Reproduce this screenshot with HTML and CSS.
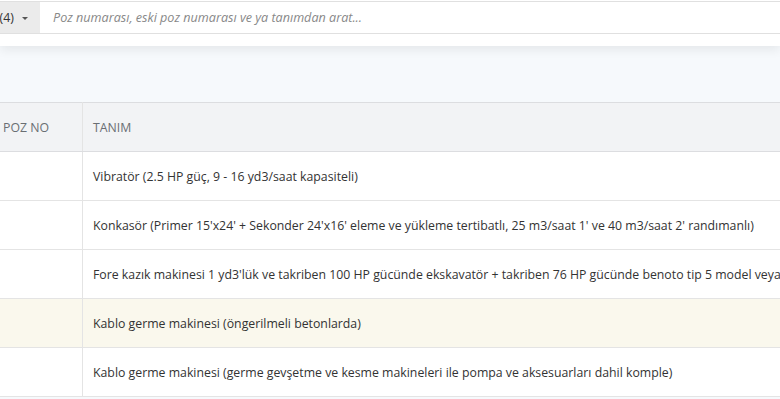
FILE: index.html
```html
<!DOCTYPE html>
<html lang="tr">
<head>
  <meta charset="UTF-8">
  <title>Pozlar</title>
  <link rel="stylesheet" href="styles.css">
</head>
<body>
  <div class="topbar">
    <div class="search">
      <button class="filter">Tümü (4) <span class="caret"></span></button>
      <input type="text" class="query" placeholder="Poz numarası, eski poz numarası ve ya tanımdan arat...">
    </div>
  </div>
  <div class="band"></div>
  <table class="grid">
    <thead>
      <tr>
        <th class="col-no">Poz No</th>
        <th>Tanım</th>
      </tr>
    </thead>
    <tbody>
      <tr><td class="col-no"></td><td>Vibratör (2.5 HP güç, 9 - 16 yd3/saat kapasiteli)</td></tr>
      <tr><td class="col-no"></td><td>Konkasör (Primer 15'x24' + Sekonder 24'x16' eleme ve yükleme tertibatlı, 25 m3/saat 1' ve 40 m3/saat 2' randımanlı)</td></tr>
      <tr><td class="col-no"></td><td>Fore kazık makinesi 1 yd3'lük ve takriben 100 HP gücünde ekskavatör + takriben 76 HP gücünde benoto tip 5 model veya muadili</td></tr>
      <tr class="active"><td class="col-no"></td><td>Kablo germe makinesi (öngerilmeli betonlarda)</td></tr>
      <tr><td class="col-no"></td><td>Kablo germe makinesi (germe gevşetme ve kesme makineleri ile pompa ve aksesuarları dahil komple)</td></tr>
    </tbody>
  </table>
</body>
</html>
```

FILE: styles.css
```css
body {
  margin: 0;
  width: 780px;
  height: 399px;
  overflow: hidden;
  background-color: #f6f9fc;
  font-family: "Segoe UI", "Open Sans", sans-serif;
  font-size: 12.3px;
  color: #333;
}

.topbar {
  background-color: #fff;
  height: 46px;
  padding-top: 1px;
  box-sizing: border-box;
  box-shadow: 0 4px 10px rgba(0, 0, 0, 0.07);
  position: relative;
}

.search {
  display: flex;
  height: 33px;
  margin-left: -38px;
  border-top: 1px solid #e0e0e0;
  border-bottom: 1px solid #e0e0e0;
  box-sizing: border-box;
}

.filter {
  width: 78px;
  border: none;
  background-color: #ebebeb;
  font-family: inherit;
  font-size: 12.3px;
  color: #333;
  text-align: right;
  padding: 0 12px 0 0;
  white-space: nowrap;
}

.caret {
  display: inline-block;
  margin-left: 5px;
  vertical-align: middle;
  border-left: 3px solid transparent;
  border-right: 3px solid transparent;
  border-top: 3px solid #555;
}

.query {
  flex: 1;
  border: none;
  outline: none;
  padding: 0 13px;
  font-family: inherit;
  font-size: 12.6px;
}

.query::placeholder {
  color: #888;
  font-style: italic;
}

.band {
  height: 56px;
}

.grid {
  border-collapse: collapse;
  table-layout: fixed;
  width: 900px;
  margin-left: -7px;
  background-color: #fff;
}

.grid th {
  height: 48px;
  background-color: #f2f3f5;
  color: #6a6e73;
  font-weight: normal;
  text-transform: uppercase;
  text-align: left;
  padding: 0 10px;
  border-top: 1px solid #dcdde0;
  border-bottom: 1px solid #dcdde0;
  white-space: nowrap;
}

.grid td {
  height: 48px;
  padding: 0 10px;
  border-bottom: 1px solid #e4e4e4;
  white-space: nowrap;
  overflow: hidden;
}

.grid .col-no {
  width: 69px;
  border-right: 1px solid #e4e4e4;
}

.grid tr.active td {
  background-color: #faf8ed;
}
```
